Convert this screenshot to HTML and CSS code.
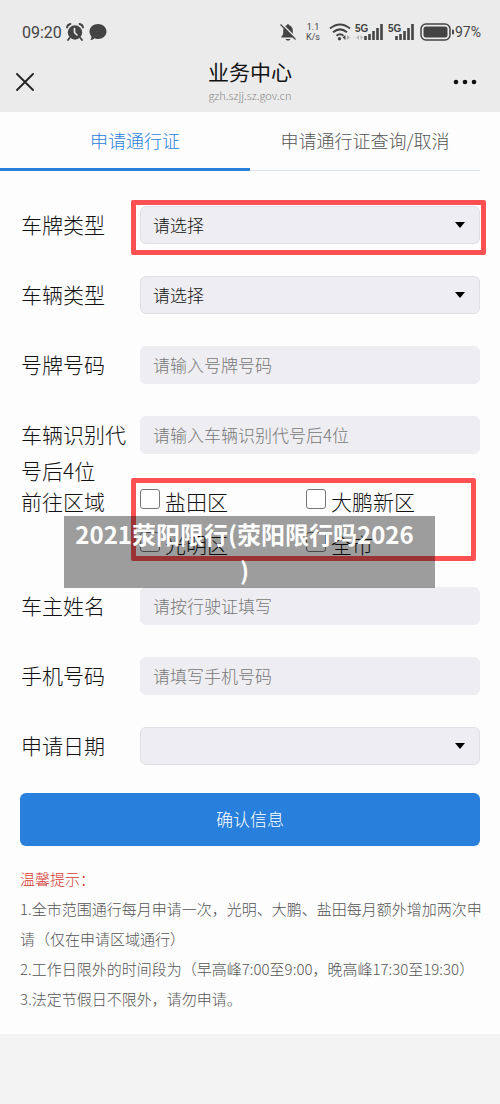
FILE: index.html
```html
<!DOCTYPE html>
<html lang="zh-CN">
<head>
  <meta charset="UTF-8" />
  <meta name="viewport" content="width=device-width, initial-scale=1.0"/>
  <title>业务中心</title>
  <link rel="stylesheet" href="styles.css">
</head>
<body>

  <header class="header">
    <div class="status-bar">
      <span class="time">09:20</span>
      <svg class="alarm" width="18" height="18" viewBox="0 0 18 18">
        <circle cx="9" cy="9.5" r="7.2" fill="#444"/>
        <path d="M1 4.5 Q1.500 1.500 4.500 1M17 4.500 Q16.500 1.500 13.500 1M3.500 15 L2 17M14.500 15 L16 17" fill="none" stroke="#444" stroke-width="1.8" stroke-linecap="round"/>
        <path d="M8.500 5.500V9.500L11 12" fill="none" stroke="#ebebeb" stroke-width="1.600" stroke-linecap="round"/>
      </svg>
      <svg class="chat" width="18" height="18" viewBox="0 0 18 18">
        <path d="M9 1C13.500 1 17.500 4 17.500 8.500S13.500 16 9 16C7.500 16 6.500 15.700 5.500 15.200C4.500 16.300 3 17 1.500 17C2.300 15.800 2.500 14.500 2.200 13C1 11.800 0.500 10.200 0.500 8.500C0.500 4 4.500 1 9 1Z" fill="#444"/>
      </svg>
      <div class="status-right">
        <svg width="18" height="20" viewBox="0 0 18 20">
          <path d="M9 2.200C9.900 2.200 10.200 2.700 10.200 3.300C12.500 4 13.800 6 13.800 8.500V12L16 15.500H2L4.200 12V8.500C4.200 6 5.500 4 7.800 3.300C7.800 2.700 8.100 2.200 9 2.200ZM6.700 17H11.300C11 19 7 19 6.700 17Z" fill="#444"/>
          <path d="M2.500 1.500L17.500 16.500" stroke="#ebebeb" stroke-width="1.500"/>
          <path d="M1.500 2.500L16.500 17.500" stroke="#444" stroke-width="1.300"/>
        </svg>
        <span class="speed">1.1<br>K/s</span>
        <svg class="wifi" width="22" height="18" viewBox="0 0 22 18">
          <path d="M1 5.500Q11 -2.500 21 5.500M4 9.300Q11 3.500 18 9.300M7.500 12.700Q11 9.800 14.500 12.700" fill="none" stroke="#444" stroke-width="2"/>
          <circle cx="10.500" cy="15.800" r="1.700" fill="#444"/>
          <path d="M16.500 12V17L13.500 14.500Z" fill="#444"/>
          <path d="M18 12V17L21 14.500Z" fill="#aaa"/>
        </svg>
        <svg class="signal" width="29" height="18" viewBox="0 0 29 18">
          <text x="0" y="9" class="net">5G</text>
          <path d="M4 12V17L1 14.500ZM5.500 12V17L8.500 14.500Z" fill="#bbb"/>
          <path d="M10.500 17V13M14.500 17V11M18.500 17V8M22.500 17V5M26.500 17V1" stroke="#444" stroke-width="2.600"/>
        </svg>
        <svg class="signal" width="29" height="18" viewBox="0 0 29 18">
          <text x="0" y="9" class="net">5G</text>
          <path d="M8.500 17V13M12.500 17V11M16.500 17V8M20.500 17V5M24.500 17V1" stroke="#444" stroke-width="2.600"/>
        </svg>
        <svg class="battery" width="35" height="18" viewBox="0 0 35 18">
          <rect x="1" y="1" width="29" height="16" rx="5" fill="none" stroke="#444" stroke-width="1.500"/>
          <rect x="3.500" y="3.500" width="24" height="11" rx="2.500" fill="#444"/>
          <rect x="32" y="6.500" width="2" height="5" rx="1" fill="#444"/>
        </svg>
        <span class="percent">97%</span>
      </div>
    </div>
    <div class="title-bar">
      <button class="icon-button" aria-label="关闭">
        <svg width="18" height="18" viewBox="0 0 18 18">
          <path d="M1 1L17 17M17 1L1 17" stroke="#222" stroke-width="1.800" stroke-linecap="round"/>
        </svg>
      </button>
      <div class="title">
        <h1>业务中心</h1>
        <p>gzh.szjj.sz.gov.cn</p>
      </div>
      <button class="icon-button more" aria-label="更多">
        <svg width="24" height="18" viewBox="0 0 24 18">
          <g fill="#111"><circle cx="3" cy="9" r="2.300"/><circle cx="12" cy="9" r="2.300"/><circle cx="21" cy="9" r="2.300"/></g>
        </svg>
      </button>
    </div>
  </header>

  <main class="page">
    <nav class="tabs">
      <a class="tab active" href="#apply">申请通行证</a>
      <a class="tab" href="#query">申请通行证查询/取消</a>
    </nav>

    <form class="form" id="apply">
      <div class="row">
        <label class="label" for="plateType">车牌类型</label>
        <div class="field select marked">
          <select class="control" id="plateType"><option>请选择</option></select>
        </div>
      </div>
      <div class="row">
        <label class="label" for="carType">车辆类型</label>
        <div class="field select">
          <select class="control" id="carType"><option>请选择</option></select>
        </div>
      </div>
      <div class="row">
        <label class="label" for="plateNo">号牌号码</label>
        <div class="field"><input class="control" type="text" id="plateNo" placeholder="请输入号牌号码" /></div>
      </div>
      <div class="row row-tight">
        <label class="label" for="vin">车辆识别代号后4位</label>
        <div class="field"><input class="control" type="text" id="vin" placeholder="请输入车辆识别代号后4位" /></div>
      </div>
      <div class="row area-row" role="group" aria-labelledby="areaLabel">
        <span class="label" id="areaLabel">前往区域</span>
        <div class="field areas marked">
          <label class="check"><input type="checkbox" />盐田区</label>
          <label class="check"><input type="checkbox" />大鹏新区</label>
          <label class="check"><input type="checkbox" />光明区</label>
          <label class="check"><input type="checkbox" />全市</label>
        </div>
      </div>
      <div class="row">
        <label class="label" for="owner">车主姓名</label>
        <div class="field"><input class="control" type="text" id="owner" placeholder="请按行驶证填写" /></div>
      </div>
      <div class="row">
        <label class="label" for="phone">手机号码</label>
        <div class="field"><input class="control" type="tel" id="phone" placeholder="请填写手机号码" /></div>
      </div>
      <div class="row">
        <label class="label" for="date">申请日期</label>
        <div class="field select">
          <select class="control" id="date"><option></option></select>
        </div>
      </div>
      <button class="submit" type="button">确认信息</button>
    </form>

    <section class="tips">
      <h2>温馨提示：</h2>
      <p>1.全市范围通行每月申请一次，光明、大鹏、盐田每月额外增加两次申请（仅在申请区域通行）</p>
      <p>2.工作日限外的时间段为（早高峰7:00至9:00，晚高峰17:30至19:30）</p>
      <p>3.法定节假日不限外，请勿申请。</p>
    </section>
  </main>

  <div class="caption">2021荥阳限行(荥阳限行吗2026)</div>

</body>
</html>
```

FILE: styles.css
```css
* {
  box-sizing: border-box;
}
body {
  position: relative;
  margin: 0;
  min-height: 100vh;
  background-color: #f3f3f3;
  color: #111;
  font-family: "Noto Sans CJK SC", sans-serif;
  font-weight: 300;
}
h1, h2, p {
  margin: 0;
  font-weight: 300;
}
svg {
  display: block;
  flex: none;
}

/* header */
.header {
  height: 112px;
  background-color: #ebebeb;
}
.status-bar {
  display: flex;
  align-items: center;
  height: 52px;
  padding: 12px 19px 0 22px;
  color: #444;
}
.time, .percent {
  font-family: Roboto, sans-serif;
  font-size: 16px;
  font-weight: 400;
}
.alarm {
  margin-left: 4px;
}
.chat {
  margin-left: 5px;
}
.status-right {
  display: flex;
  align-items: center;
  margin-left: auto;
}
.speed {
  margin: 0 9px;
  font-family: Roboto, sans-serif;
  font-size: 9px;
  font-weight: 400;
  line-height: 10px;
  text-align: center;
}
.signal {
  margin-left: 4px;
}
.net {
  font: bold 10px "Liberation Sans", sans-serif;
  fill: #444;
}
.battery {
  margin-left: 3px;
}
.percent {
  font-size: 14px;
}
.title-bar {
  display: flex;
  justify-content: space-between;
  align-items: center;
  height: 60px;
  padding: 0 23px 0 16px;
}
.icon-button {
  display: flex;
  width: 31px;
  padding: 0;
  border: none;
  background: none;
}
.icon-button.more {
  width: 24px;
}
.title {
  text-align: center;
}
.title h1 {
  font-size: 21px;
  line-height: 26px;
  font-weight: 400;
}
.title p {
  color: #888;
  font-size: 11px;
  line-height: 22px;
}

/* tabs */
.page {
  padding-bottom: 20px;
  background-color: #fdfdfd;
}
.tabs {
  display: flex;
  padding-right: 20px;
}
.tab {
  flex: 1;
  height: 59px;
  border-bottom: 1px solid #dce3ea;
  color: #555;
  font-size: 18px;
  line-height: 56px;
  text-align: center;
  text-decoration: none;
}
.tab.active {
  flex: 0 0 50vw;
  padding-left: 20px;
  border-bottom: 3px solid #287fdc;
  color: #287fdc;
}

/* form */
.form {
  padding: 35px 20px 0;
}
.row {
  display: flex;
  align-items: flex-start;
  margin-bottom: 32px;
}
.row-tight {
  margin-bottom: 0;
}
.area-row {
  margin-bottom: 30px;
}
.label {
  flex: 0 0 120px;
  padding: 0 13px 0 1px;
  font-size: 21px;
  line-height: 36px;
}
.area-row .label {
  line-height: 26px;
}
.field {
  position: relative;
  flex: 1;
  min-width: 0;
}
.control {
  display: block;
  width: 100%;
  height: 38px;
  padding: 0 12px 2px;
  border: 1px solid #eeedf2;
  border-radius: 6px;
  background-color: #eeedf2;
  color: #111;
  font: inherit;
  font-size: 17px;
  appearance: none;
}
.select .control {
  border-color: #e0e0e4;
}
.control::placeholder {
  color: #777;
  opacity: 1;
}
.select::after {
  content: "";
  position: absolute;
  top: 16px;
  right: 15px;
  border: 5px solid transparent;
  border-top: 6px solid #000;
  border-bottom: none;
  pointer-events: none;
}
.areas {
  display: grid;
  grid-template-columns: 1fr 1fr;
  row-gap: 17px;
  padding-right: 8px;
}
.check {
  display: flex;
  gap: 5px;
  font-size: 21px;
  line-height: 26px;
}
.check input {
  width: 20px;
  height: 20px;
  margin: 1px 0 0;
  border: 1px solid #777;
  border-radius: 3px;
  background-color: #fff;
  appearance: none;
}

/* red frames around the important fields */
.marked::before {
  content: "";
  position: absolute;
  inset: -6px -6px -11px -9px;
  border: 5px solid #fb5153;
  border-radius: 2px;
  pointer-events: none;
}
.areas.marked::before {
  inset: -10px 4px -4px -9px;
}
.submit {
  display: block;
  width: 100%;
  height: 53px;
  margin-top: -4px;
  padding: 0 0 2px;
  border: none;
  border-radius: 6px;
  background-color: #287fdc;
  color: #fff;
  font: inherit;
  font-size: 17px;
}

/* tips */
.tips {
  padding: 18px 16px 0 20px;
  color: #555;
  font-size: 15px;
  line-height: 30px;
}
.tips h2 {
  color: #d43a34;
  font-size: 15px;
}

/* caption over the form */
.caption {
  position: absolute;
  top: 516px;
  left: 64px;
  right: 65px;
  padding: 0 20px 0 10px;
  background-color: rgba(0, 0, 0, 0.38);
  color: #fff;
  font-size: 24px;
  font-weight: 700;
  line-height: 36px;
  text-align: center;
  word-break: break-all;
  line-break: anywhere;
}
```
